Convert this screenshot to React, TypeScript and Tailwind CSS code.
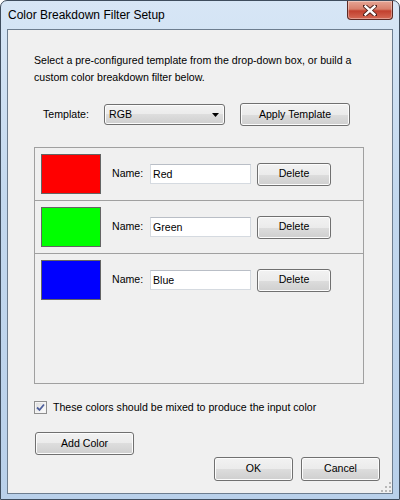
import React, { useState } from 'react';

const font = { fontFamily: '"Liberation Sans", Arial, sans-serif' };

const face =
  'rounded-[3px] border border-[#707070] bg-[linear-gradient(#f2f2f2_0%,#ebebeb_50%,#dddddd_50%,#cfcfcf_100%)] shadow-[inset_0_0_0_1px_#fcfcfc] text-[10.6px] text-black';
const btn = `${face} flex items-center justify-center`;

interface ColorRow {
  name: string;
  color: string;
}

const Swatch: React.FC<{ row: ColorRow }> = ({ row }) => (
  <div className="flex items-center h-[52px] pl-[6px]">
    <div className="w-[60px] h-[40px] border border-[#646464]" style={{ backgroundColor: row.color }} />
    <span className="ml-[11px] w-[38px] text-[10.6px] text-black">Name:</span>
    <input
      defaultValue={row.name}
      className="w-[101px] h-[20px] border border-[#d5dae0] border-t-[#b9bec6] bg-white pl-[2px] text-[10.6px] text-black outline-none"
      style={font}
    />
    <button type="button" className={`${btn} ml-[6px] w-[74px] h-[23px]`} style={font}>
      Delete
    </button>
  </div>
);

const App: React.FC = () => {
  const [mixed, setMixed] = useState(true);
  const rows: ColorRow[] = [
    { name: 'Red', color: '#ff0000' },
    { name: 'Green', color: '#00ff00' },
    { name: 'Blue', color: '#0000ff' },
  ];

  return (
    <div
      className="w-[400px] h-[500px] flex flex-col rounded-t-[7px] border border-[#3f4d5e] bg-[linear-gradient(#d7e6f6,#c3d8ee_40%,#b9d0ea)] px-[6px] pb-[5px]"
      style={font}
    >
      {/* Title bar */}
      <div className="h-[28px] flex items-start justify-between">
        <span className="ml-[1px] mt-[7px] text-[12px] leading-[15px] text-black">Color Breakdown Filter Setup</span>
        <div className="w-[46px] h-[19px] rounded-b-[4px] border border-t-0 border-[#5c2a24] bg-[linear-gradient(#e6a595_0%,#d8806c_45%,#c2402e_55%,#d56a55_100%)] shadow-[inset_0_0_0_1px_rgba(255,255,255,0.35)] flex items-center justify-center">
          <svg width="14" height="11" viewBox="0 0 14 11">
            <path
              d="M2 1 L12 10 M12 1 L2 10"
              stroke="#4a1f1a"
              strokeWidth="4.2"
              strokeLinecap="square"
              fill="none"
            />
            <path d="M2.5 1.5 L11.5 9.5 M11.5 1.5 L2.5 9.5" stroke="#ffffff" strokeWidth="2.4" strokeLinecap="square" fill="none" />
          </svg>
        </div>
      </div>

      {/* Client area */}
      <div className="relative flex-1 flex flex-col border border-[#6d7d8f] bg-[#f0f0f0] pt-[22px] pl-[26px] pr-[12px]">
        <p className="text-[10.6px] leading-[17px] text-black whitespace-nowrap">
          Select a pre-configured template from the drop-down box, or build a
          <br />
          custom color breakdown filter below.
        </p>

        <div className="mt-[17px] flex items-center h-[23px]">
          <span className="ml-[9px] w-[61px] text-[10.6px] text-black">Template:</span>
          <div className={`${face} w-[121px] h-[21px] flex items-center justify-between pl-[4px] pr-[5px]`}>
            <span>RGB</span>
            <svg width="7" height="4" viewBox="0 0 7 4">
              <path d="M0 0 H7 L3.5 4 Z" fill="#000" />
            </svg>
          </div>
          <button type="button" className={`${btn} ml-[15px] w-[110px] h-[23px]`} style={font}>
            Apply Template
          </button>
        </div>

        <div className="mt-[21px] w-[330px] h-[237px] border border-[#a0a0a0] flex flex-col">
          {rows.map((r, i) => (
            <div key={r.name} className={i < rows.length - 1 ? 'border-b border-[#a0a0a0]' : ''}>
              <Swatch row={r} />
            </div>
          ))}
        </div>

        <label className="mt-[17px] flex items-center h-[13px] cursor-default">
          <span
            onClick={() => setMixed(!mixed)}
            className="w-[13px] h-[13px] border border-[#8f8f8f] bg-[linear-gradient(135deg,#dcdcdc,#ffffff)] shadow-[inset_0_0_0_1px_#f4f4f4] flex items-center justify-center"
          >
            {mixed && (
              <svg width="9" height="9" viewBox="0 0 9 9">
                <path d="M1 4.5 L3.5 7 L8 1.5" stroke="#4d5f9c" strokeWidth="1.8" fill="none" />
              </svg>
            )}
          </span>
          <span className="ml-[6px] text-[10.6px] text-black">These colors should be mixed to produce the input color</span>
        </label>

        <div className="mt-[18px] flex items-start">
          <button type="button" className={`${btn} ml-[1px] w-[99px] h-[23px]`} style={font}>
            Add Color
          </button>
          <div className="ml-auto mt-[25px] flex gap-[8px]">
            <button type="button" className={`${btn} w-[79px] h-[24px]`} style={font}>
              OK
            </button>
            <button type="button" className={`${btn} w-[79px] h-[24px]`} style={font}>
              Cancel
            </button>
          </div>
        </div>

        {/* size grip */}
        <svg className="absolute right-[1px] bottom-[1px]" width="11" height="11" viewBox="0 0 11 11">
          {[
            [9, 1],
            [9, 5],
            [5, 5],
            [9, 9],
            [5, 9],
            [1, 9],
          ].map(([x, y]) => (
            <rect key={`${x}-${y}`} x={x} y={y} width="2" height="2" fill="#b8b8b8" />
          ))}
        </svg>
      </div>
    </div>
  );
};

export default App;
